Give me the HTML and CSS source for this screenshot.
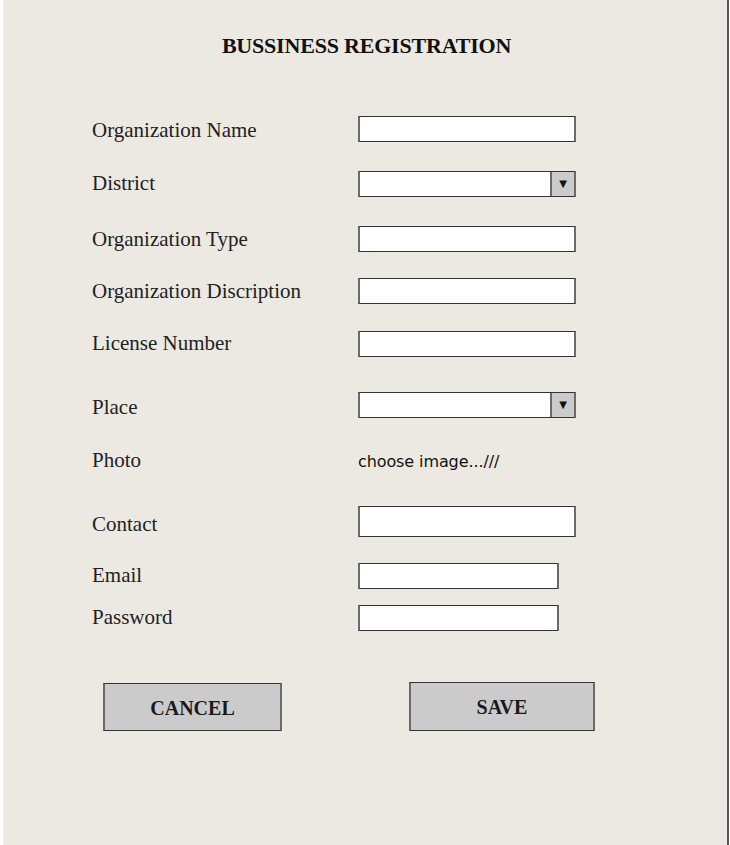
FILE: index.html
```html
<!DOCTYPE html>
<html lang="en">
<head>
<meta charset="utf-8">
<title>Bussiness Registration</title>
<link rel="stylesheet" href="styles.css">
</head>
<body>
<div class="page">
  <h1 class="title">BUSSINESS REGISTRATION</h1>
  <form class="form">
    <label class="label nudge">Organization Name</label>
    <div class="field"><span class="input"></span></div>

    <label class="label">District</label>
    <div class="field"><span class="input select"><span class="arrow">&#9660;</span></span></div>

    <label class="label">Organization Type</label>
    <div class="field"><span class="input"></span></div>

    <label class="label">Organization Discription</label>
    <div class="field"><span class="input"></span></div>

    <label class="label">License Number</label>
    <div class="field"><span class="input"></span></div>

    <label class="label low">Place</label>
    <div class="field"><span class="input select"><span class="arrow">&#9660;</span></span></div>

    <label class="label">Photo</label>
    <div class="field"><span class="file">choose image...///</span></div>

    <label class="label low">Contact</label>
    <div class="field"><span class="input tall"></span></div>

    <label class="label">Email</label>
    <div class="field"><span class="input short"></span></div>

    <label class="label">Password</label>
    <div class="field"><span class="input short"></span></div>
  </form>
  <div class="actions">
    <button class="btn cancel" type="button">CANCEL</button>
    <button class="btn save" type="button">SAVE</button>
  </div>
</div>
</body>
</html>
```

FILE: styles.css
```css
html, body {
  margin: 0;
  padding: 0;
  background: #ffffff;
}

body {
  width: 730px;
  height: 845px;
  overflow: hidden;
  font-family: "Liberation Serif", "Times New Roman", serif;
  color: #1a1a1a;
}

.page {
  box-sizing: border-box;
  margin-left: 3px;
  width: 726px;
  height: 845px;
  background: #ece9e2;
  border-left: 1px solid #f4f3f0;
  border-right: 2px solid #555555;
  padding-top: 33px;
}

.title {
  margin: 0 0 0 2px;
  text-align: center;
  font-size: 22px;
  font-weight: bold;
  letter-spacing: -0.2px;
  line-height: 26px;
  color: #111;
}

.form {
  margin-top: 42px;
  display: grid;
  grid-template-columns: 266px 1fr;
  grid-template-rows: 55px 55px 56px 48px 57px 65px 46px 76px 33px 51px;
  padding-left: 88px;
}

.label {
  display: flex;
  align-items: center;
  font-size: 21px;
  color: #222;
}

.label.nudge {
  padding-top: 3px;
}

.label.low {
  padding-top: 6px;
}

.field {
  display: flex;
  align-items: center;
}

.input {
  box-sizing: border-box;
  display: block;
  position: relative;
  width: 218px;
  height: 26px;
  background: #fff;
  border: 1px solid #333;
  border-left: 2px solid #6a6a6a;
  border-right: 2px solid #6a6a6a;
  border-radius: 1px;
}

.input.tall {
  height: 31px;
}

.input.short {
  width: 201px;
}

.select .arrow {
  position: absolute;
  top: 0;
  right: 0;
  bottom: 0;
  width: 24px;
  box-sizing: border-box;
  background: #cbcbcb;
  border-left: 2px solid #6a6a6a;
  font-family: "DejaVu Sans", sans-serif;
  font-size: 10px;
  line-height: 24px;
  text-align: center;
  color: #111;
}

.file {
  font-family: "DejaVu Sans", sans-serif;
  font-size: 16px;
  letter-spacing: -0.1px;
  color: #111;
  padding-top: 2px;
}

.actions {
  display: flex;
  margin-top: 39px;
  padding-left: 99px;
  align-items: flex-start;
}

.btn {
  box-sizing: border-box;
  background: #cbcbcb;
  border: 1px solid #333;
  border-left: 2px solid #6a6a6a;
  border-right: 2px solid #6a6a6a;
  font-family: "Liberation Serif", "Times New Roman", serif;
  font-weight: bold;
  font-size: 20px;
  color: #1a1a1a;
  padding: 0;
  cursor: pointer;
}

.cancel {
  width: 179px;
  height: 48px;
  margin-top: 1px;
  padding-top: 2px;
}

.save {
  width: 186px;
  height: 49px;
  margin-left: 127px;
  padding-top: 2px;
}
```
